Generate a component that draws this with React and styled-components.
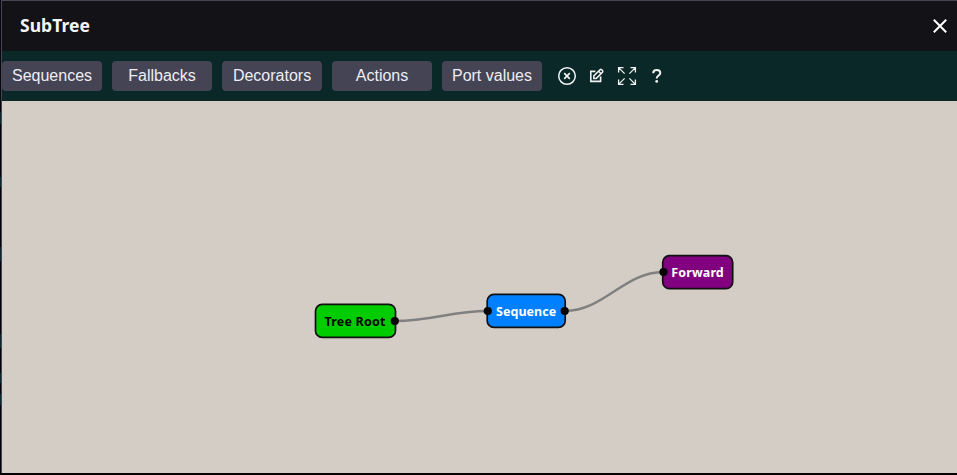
import React from "react";
import styled, { createGlobalStyle } from "styled-components";

const GlobalStyle = createGlobalStyle`
  * { box-sizing: border-box; }
  html, body { margin: 0; padding: 0; background: #020204; overflow: hidden; }
`;

const Frame = styled.div`
  display: grid;
  grid-template-columns: 1px 1fr;
  height: 475px;
  background: #020204;
`;

const Edge = styled.div`
  background: linear-gradient(#08090d 0 100px, #020204 100px 112px, #06292c 112px 124px,
    #020204 124px 177px, #06292c 177px 187px, #020204 187px 247px, #06292c 247px 261px,
    #020204 261px 334px, #06292c 334px 348px, #020204 348px 373px, #06292c 373px 383px,
    #020204 383px 394px, #06292c 394px 405px, #020204 405px);
`;

const Dialog = styled.section`
  display: flex;
  flex-direction: column;
  height: 473px;
  border-top: 1px solid #444455;
  border-left: 1px solid #444455;
`;

const Header = styled.header`
  display: flex;
  align-items: center;
  justify-content: space-between;
  height: 50px;
  padding: 0 10px 0 18px;
  background: #121217;
  color: #f5f5f8;
`;

const Title = styled.h1`
  margin: 0;
  padding-bottom: 2px;
  font: 700 17.5px/24px "Noto Sans", sans-serif;
  letter-spacing: 0.05px;
`;

const CloseButton = styled.button`
  display: flex;
  padding: 0;
  border: 0;
  background: none;
  color: #fff;
`;

const Toolbar = styled.nav`
  display: flex;
  align-items: center;
  gap: 10px;
  height: 50px;
  background: #0b2829;
`;

const MenuButton = styled.button`
  width: 100px;
  height: 30px;
  padding: 0 0 1px;
  border: 0;
  border-radius: 4px;
  background: #444455;
  color: #eeeef2;
  font: 16px/20px "Liberation Sans", Arial, sans-serif;
  white-space: nowrap;
`;

const IconGroup = styled.div`
  display: flex;
  align-items: center;
  gap: 10px;
  padding-left: 5px;
`;

const IconButton = styled.button`
  display: flex;
  padding: 0;
  border: 0;
  background: none;
  color: #f0f2f2;
`;

const Canvas = styled.main`
  flex: 1;
  background: #d4cdc6;
`;

const Diagram = styled.svg`
  display: block;
`;

const Link = styled.path`
  fill: none;
  stroke: #808080;
  stroke-width: 2.4px;
`;

const NodeBox = styled.rect`
  fill: ${(p) => p.$fill};
  stroke: #111;
  stroke-width: 1.7px;
`;

const NodeLabel = styled.text`
  fill: ${(p) => p.$ink};
  font: 700 12.5px "Noto Sans", sans-serif;
  letter-spacing: ${(p) => p.$spacing}px;
`;

const Port = styled.circle`
  fill: #050505;
`;

const menus = ["Sequences", "Fallbacks", "Decorators", "Actions", "Port values"];

const nodes = [
  { label: "Tree Root", x: 313.5, y: 203.4, w: 80, textX: 322.4, fill: "#00cc00", ink: "#050505", spacing: 0.22 },
  { label: "Sequence", x: 485.2, y: 193.4, w: 78, textX: 494, fill: "#0080ff", ink: "#fff", spacing: 0.05 },
  { label: "Forward", x: 660.7, y: 154.7, w: 70, textX: 669.3, fill: "#800080", ink: "#fff", spacing: 0.13 },
];

const links = ["M392.8 220C430 220 449 210 485.8 210", "M562.7 210C602 210 622 171 661.5 171"];

const ports = [[392.8, 220], [485.8, 210], [562.7, 210], [661.5, 171]];

function Icon({ children, size = 20, width = 1.3 }) {
  return (
    <svg width={size} height={size} viewBox={`0 0 ${size} ${size}`} fill="none"
      stroke="currentColor" strokeWidth={width}>
      {children}
    </svg>
  );
}

export default function App() {
  return (
    <>
      <GlobalStyle />
      <Frame>
        <Edge />
        <Dialog>
          <Header>
            <Title>SubTree</Title>
            <CloseButton aria-label="Close">
              <Icon size={14} width={2}><path d="M.8.8l12.4 12.4M13.2.8L.8 13.2" /></Icon>
            </CloseButton>
          </Header>
          <Toolbar>
            {menus.map((m) => <MenuButton key={m}>{m}</MenuButton>)}
            <IconGroup>
              <IconButton aria-label="Clear">
                <Icon width={1.5}>
                  <circle cx="10" cy="10" r="8.3" />
                  <path d="M7.2 7.2l5.6 5.6M12.8 7.2l-5.6 5.6" strokeWidth="1.7" />
                </Icon>
              </IconButton>
              <IconButton aria-label="Edit">
                <Icon width={1.6}>
                  <path d="M8.4 5.4H3.8v10h9.8v-4.8" />
                  <path d="M6.8 12.4v-2.5l6.2-6.2q.8-.7 1.6 0l.9.9q.7.8 0 1.6l-6.2 6.2zM11.6 5.2l2.4 2.4" strokeWidth="1.5" />
                </Icon>
              </IconButton>
              <IconButton aria-label="Fit to view">
                <Icon width={1.3}>
                  <path d="M1.6 6.5V1.6h4.9M1.6 1.6l6 6M13.5 1.6h4.9v4.9M18.4 1.6l-6 6M1.6 13.5v4.9h4.9M1.6 18.4l6-6M13.5 18.4h4.9v-4.9M18.4 18.4l-6-6" />
                </Icon>
              </IconButton>
              <IconButton aria-label="Help">
                <Icon width={2}>
                  <path d="M6.2 7.2C6.2 5.2 7.5 4.1 9.7 4.1c2.2 0 3.6 1.1 3.6 2.9 0 2.4-3.6 2.6-3.6 5.4" />
                  <circle cx="9.7" cy="15.4" r="1.4" fill="currentColor" stroke="none" />
                </Icon>
              </IconButton>
            </IconGroup>
          </Toolbar>
          <Canvas>
            <Diagram width="955" height="372">
              {links.map((d) => <Link key={d} d={d} />)}
              {nodes.map((n) => (
                <g key={n.label}>
                  <NodeBox x={n.x} y={n.y} width={n.w} height="33" rx="6.7" $fill={n.fill} />
                  <NodeLabel x={n.textX} y={n.y + 21.6} $ink={n.ink} $spacing={n.spacing}>{n.label}</NodeLabel>
                </g>
              ))}
              {ports.map(([x, y]) => <Port key={x} cx={x} cy={y} r="4.1" />)}
            </Diagram>
          </Canvas>
        </Dialog>
      </Frame>
    </>
  );
}
